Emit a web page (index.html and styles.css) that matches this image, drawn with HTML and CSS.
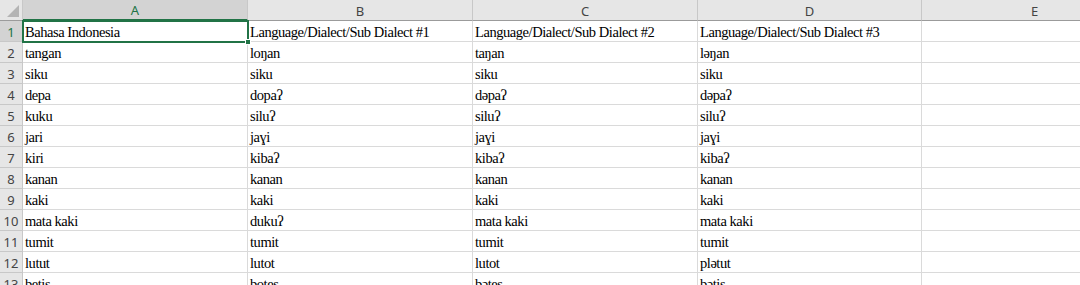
FILE: index.html
```html
<!DOCTYPE html>
<html lang="en">
<head>
  <meta charset="UTF-8">
  <meta name="viewport" content="width=device-width, initial-scale=1.0">
  <title>Sheet1</title>

  <link rel="stylesheet" href="styles.css">
</head>
<body>

  <div class="sheet">
    <!-- column headers -->
    <div class="corner"><span class="corner-mark"></span></div>
    <div class="col-head active">A</div>
    <div class="col-head">B</div>
    <div class="col-head">C</div>
    <div class="col-head">D</div>
    <div class="col-head">E</div>

    <div class="row-head active">1</div>
    <div class="cell selected">Bahasa Indonesia<span class="handle"></span></div>
    <div class="cell">Language/Dialect/Sub Dialect #1</div>
    <div class="cell">Language/Dialect/Sub Dialect #2</div>
    <div class="cell">Language/Dialect/Sub Dialect #3</div>
    <div class="cell"></div>

    <div class="row-head">2</div>
    <div class="cell">tangan</div>
    <div class="cell">loŋan</div>
    <div class="cell">taŋan</div>
    <div class="cell">ləŋan</div>
    <div class="cell"></div>

    <div class="row-head">3</div>
    <div class="cell">siku</div>
    <div class="cell">siku</div>
    <div class="cell">siku</div>
    <div class="cell">siku</div>
    <div class="cell"></div>

    <div class="row-head">4</div>
    <div class="cell">depa</div>
    <div class="cell">dopaʔ</div>
    <div class="cell">dəpaʔ</div>
    <div class="cell">dəpaʔ</div>
    <div class="cell"></div>

    <div class="row-head">5</div>
    <div class="cell">kuku</div>
    <div class="cell">siluʔ</div>
    <div class="cell">siluʔ</div>
    <div class="cell">siluʔ</div>
    <div class="cell"></div>

    <div class="row-head">6</div>
    <div class="cell">jari</div>
    <div class="cell">jaɣi</div>
    <div class="cell">jaɣi</div>
    <div class="cell">jaɣi</div>
    <div class="cell"></div>

    <div class="row-head">7</div>
    <div class="cell">kiri</div>
    <div class="cell">kibaʔ</div>
    <div class="cell">kibaʔ</div>
    <div class="cell">kibaʔ</div>
    <div class="cell"></div>

    <div class="row-head">8</div>
    <div class="cell">kanan</div>
    <div class="cell">kanan</div>
    <div class="cell">kanan</div>
    <div class="cell">kanan</div>
    <div class="cell"></div>

    <div class="row-head">9</div>
    <div class="cell">kaki</div>
    <div class="cell">kaki</div>
    <div class="cell">kaki</div>
    <div class="cell">kaki</div>
    <div class="cell"></div>

    <div class="row-head">10</div>
    <div class="cell">mata kaki</div>
    <div class="cell">dukuʔ</div>
    <div class="cell">mata kaki</div>
    <div class="cell">mata kaki</div>
    <div class="cell"></div>

    <div class="row-head">11</div>
    <div class="cell">tumit</div>
    <div class="cell">tumit</div>
    <div class="cell">tumit</div>
    <div class="cell">tumit</div>
    <div class="cell"></div>

    <div class="row-head">12</div>
    <div class="cell">lutut</div>
    <div class="cell">lutot</div>
    <div class="cell">lutot</div>
    <div class="cell">plətut</div>
    <div class="cell"></div>

    <div class="row-head">13</div>
    <div class="cell">betis</div>
    <div class="cell">botes</div>
    <div class="cell">bətes</div>
    <div class="cell">bətis</div>
    <div class="cell"></div>
  </div>

</body>
</html>
```

FILE: styles.css
```css
/* General Reset */
* {
  margin: 0;
  padding: 0;
  box-sizing: border-box;
}

body {
  background-color: #fff;
  overflow: hidden;
  width: 1080px;
  height: 285px;
}

.sheet {
  display: grid;
  grid-template-columns: 23px 225px 225px 225px 224px 226px;
  grid-auto-rows: 21px;
}

.corner,
.col-head,
.row-head {
  background-color: #e6e6e6;
  color: #444;
  font-family: "Noto Sans", "Liberation Sans", sans-serif;
  font-size: 13px;
  border-right: 1px solid #c8c8c8;
  border-bottom: 1px solid #c8c8c8;
  display: flex;
  align-items: center;
  justify-content: center;
}

.corner {
  position: relative;
  border-bottom-color: #9b9b9b;
}

.corner-mark {
  position: absolute;
  right: 3px;
  bottom: 3px;
  width: 0;
  height: 0;
  border-left: 12px solid transparent;
  border-bottom: 12px solid #b4b4b4;
}

.col-head {
  border-bottom-color: #9b9b9b;
  padding-top: 1px;
}

.col-head.active {
  background-color: #d3d3d3;
  color: #217346;
  border-bottom: 2px solid #217346;
}

.row-head {
  padding-top: 2px;
}

.row-head.active {
  background-color: #d3d3d3;
  color: #217346;
}

.cell {
  font-family: "Liberation Serif", "Times New Roman", serif;
  font-size: 14.5px;
  letter-spacing: -0.45px;
  color: #000;
  border-right: 1px solid #dadada;
  border-bottom: 1px solid #dadada;
  padding: 0 2px 0 2px;
  white-space: nowrap;
  overflow: hidden;
  display: flex;
  align-items: flex-end;
  line-height: 18px;
}

.cell.selected {
  position: relative;
  overflow: visible;
  outline: 2px solid #217346;
  outline-offset: -1px;
  z-index: 1;
}

.handle {
  position: absolute;
  right: -4px;
  bottom: -4px;
  width: 6px;
  height: 6px;
  background-color: #217346;
  border: 1px solid #fff;
}
```
